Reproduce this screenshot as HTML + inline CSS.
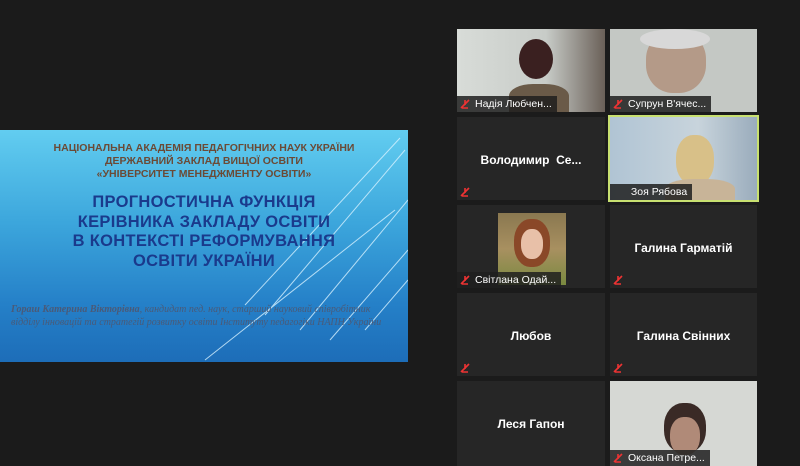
<!DOCTYPE html>
<html><head><meta charset="utf-8"><style>
body{margin:0;width:800px;height:466px;background:#1b1b1b;position:relative;overflow:hidden;font-family:"Liberation Sans","DejaVu Sans",sans-serif}
.slide{position:absolute;left:0;top:130px;width:408px;height:232px;background:linear-gradient(180deg,#62cdf0 0%,#3ca6dc 40%,#2580c8 75%,#1d6db8 100%);}
.h1{position:absolute;left:0;width:408px;text-align:center;color:#6b4a36;font-weight:bold;font-size:10.5px;line-height:13px;top:12px}
.h2{position:absolute;left:0;width:408px;text-align:center;color:#1a3a8c;font-size:16.5px;line-height:19.5px;top:63px;font-weight:bold;letter-spacing:0.3px}
.au{position:absolute;left:11px;width:380px;top:173px;color:#4a5a78;font-family:"Liberation Serif",serif;font-style:italic;font-size:10px;line-height:13px}
.t{position:absolute;background:#262626;overflow:hidden}
.n{position:absolute;width:100%;text-align:center;color:#fff;font-weight:bold;font-size:12px;top:36px}
.lb{position:absolute;left:0;bottom:0;height:16px;background:rgba(30,30,30,.85);color:#fff;font-size:10.5px;line-height:16px;padding:0 5px 0 18px;white-space:nowrap}
.m{position:absolute;left:3px;top:3px;width:10px;height:10px}
.mi{position:absolute;left:3px;bottom:3px;width:10px;height:10px}
</style></head><body>
<div class="slide">
<svg width="408" height="232" style="position:absolute;left:0;top:0">
<g stroke="#d8f2ff" stroke-width="1" opacity=".8">
<line x1="400" y1="8" x2="245" y2="175"/><line x1="405" y1="20" x2="265" y2="185"/><line x1="408" y1="70" x2="300" y2="200"/><line x1="408" y1="120" x2="330" y2="210"/><line x1="408" y1="150" x2="365" y2="200"/><line x1="395" y1="80" x2="205" y2="230"/>
</g></svg>
<div class="h1">НАЦІОНАЛЬНА АКАДЕМІЯ ПЕДАГОГІЧНИХ НАУК УКРАЇНИ<br>ДЕРЖАВНИЙ ЗАКЛАД ВИЩОЇ ОСВІТИ<br>«УНІВЕРСИТЕТ МЕНЕДЖМЕНТУ ОСВІТИ»</div>
<div class="h2">ПРОГНОСТИЧНА ФУНКЦІЯ<br>КЕРІВНИКА ЗАКЛАДУ ОСВІТИ<br>В КОНТЕКСТІ РЕФОРМУВАННЯ<br>ОСВІТИ УКРАЇНИ</div>
<div class="au"><b>Гораш Катерина Вікторівна</b>, кандидат пед. наук, старший науковий співробітник відділу інновацій та стратегій розвитку освіти Інституту педагогіки НАПН України</div>
</div>

<div class="t" style="left:457px;top:29px;width:148px;height:83px;background:linear-gradient(90deg,#d8dcd8,#c8ccc8 60%,#6a6058)">
<div style="position:absolute;left:62px;top:10px;width:34px;height:40px;border-radius:50%;background:#3a2020"></div>
<div style="position:absolute;left:52px;top:55px;width:60px;height:30px;border-radius:40% 40% 0 0;background:#6a5a48"></div>
<div class="lb"><svg class="m" viewBox="0 0 10 10"><path d="M5 1v5M2 9h6M1 9L9 1" stroke="#e33" stroke-width="1.6" fill="none"/></svg>Надія Любчен...</div></div>
<div class="t" style="left:610px;top:29px;width:147px;height:83px;background:#c4c8c4">
<div style="position:absolute;left:36px;top:2px;width:60px;height:62px;border-radius:45%;background:#b49a88"></div>
<div style="position:absolute;left:30px;top:0;width:70px;height:20px;border-radius:50%;background:#d8d8d8"></div>
<div class="lb"><svg class="m" viewBox="0 0 10 10"><path d="M5 1v5M2 9h6M1 9L9 1" stroke="#e33" stroke-width="1.6" fill="none"/></svg>Супрун В'ячес...</div></div>

<div class="t" style="left:457px;top:117px;width:148px;height:83px"><div class="n">Володимир&nbsp; Се...</div><svg class="mi" viewBox="0 0 10 10"><path d="M5 1v5M2 9h6M1 9L9 1" stroke="#e33" stroke-width="1.6" fill="none"/></svg></div>
<div class="t" style="left:608px;top:115px;width:147px;height:83px;border:2px solid #c8e070;background:linear-gradient(90deg,#b0c4d4,#c8d4dc 60%,#9aacbc)">
<div style="position:absolute;left:66px;top:18px;width:38px;height:50px;border-radius:45%;background:#d8c088"></div>
<div style="position:absolute;left:55px;top:62px;width:70px;height:25px;border-radius:40% 40% 0 0;background:#c8b498"></div>
<div class="lb">&nbsp;Зоя Рябова</div></div>

<div class="t" style="left:457px;top:205px;width:148px;height:83px">
<div style="position:absolute;left:41px;top:8px;width:68px;height:72px;background:linear-gradient(180deg,#8a7850,#a89060 50%,#7a8a40)"><div style="position:absolute;left:16px;top:6px;width:36px;height:48px;border-radius:45%;background:#8a4828"></div><div style="position:absolute;left:23px;top:16px;width:22px;height:30px;border-radius:45%;background:#e8c0a8"></div></div>
<div class="lb"><svg class="m" viewBox="0 0 10 10"><path d="M5 1v5M2 9h6M1 9L9 1" stroke="#e33" stroke-width="1.6" fill="none"/></svg>Світлана Одай...</div></div>
<div class="t" style="left:610px;top:205px;width:147px;height:83px"><div class="n">Галина Гарматій</div><svg class="mi" viewBox="0 0 10 10"><path d="M5 1v5M2 9h6M1 9L9 1" stroke="#e33" stroke-width="1.6" fill="none"/></svg></div>

<div class="t" style="left:457px;top:293px;width:148px;height:83px"><div class="n">Любов</div><svg class="mi" viewBox="0 0 10 10"><path d="M5 1v5M2 9h6M1 9L9 1" stroke="#e33" stroke-width="1.6" fill="none"/></svg></div>
<div class="t" style="left:610px;top:293px;width:147px;height:83px"><div class="n">Галина Свінних</div><svg class="mi" viewBox="0 0 10 10"><path d="M5 1v5M2 9h6M1 9L9 1" stroke="#e33" stroke-width="1.6" fill="none"/></svg></div>

<div class="t" style="left:457px;top:381px;width:148px;height:85px"><div class="n">Леся Гапон</div></div>
<div class="t" style="left:610px;top:381px;width:147px;height:85px;background:#d6d8d4">
<div style="position:absolute;left:54px;top:22px;width:42px;height:50px;border-radius:45%;background:#3a2a26"></div>
<div style="position:absolute;left:60px;top:36px;width:30px;height:38px;border-radius:45%;background:#b08a78"></div>
<div class="lb"><svg class="m" viewBox="0 0 10 10"><path d="M5 1v5M2 9h6M1 9L9 1" stroke="#e33" stroke-width="1.6" fill="none"/></svg>Оксана Петре...</div></div>
</body></html>
